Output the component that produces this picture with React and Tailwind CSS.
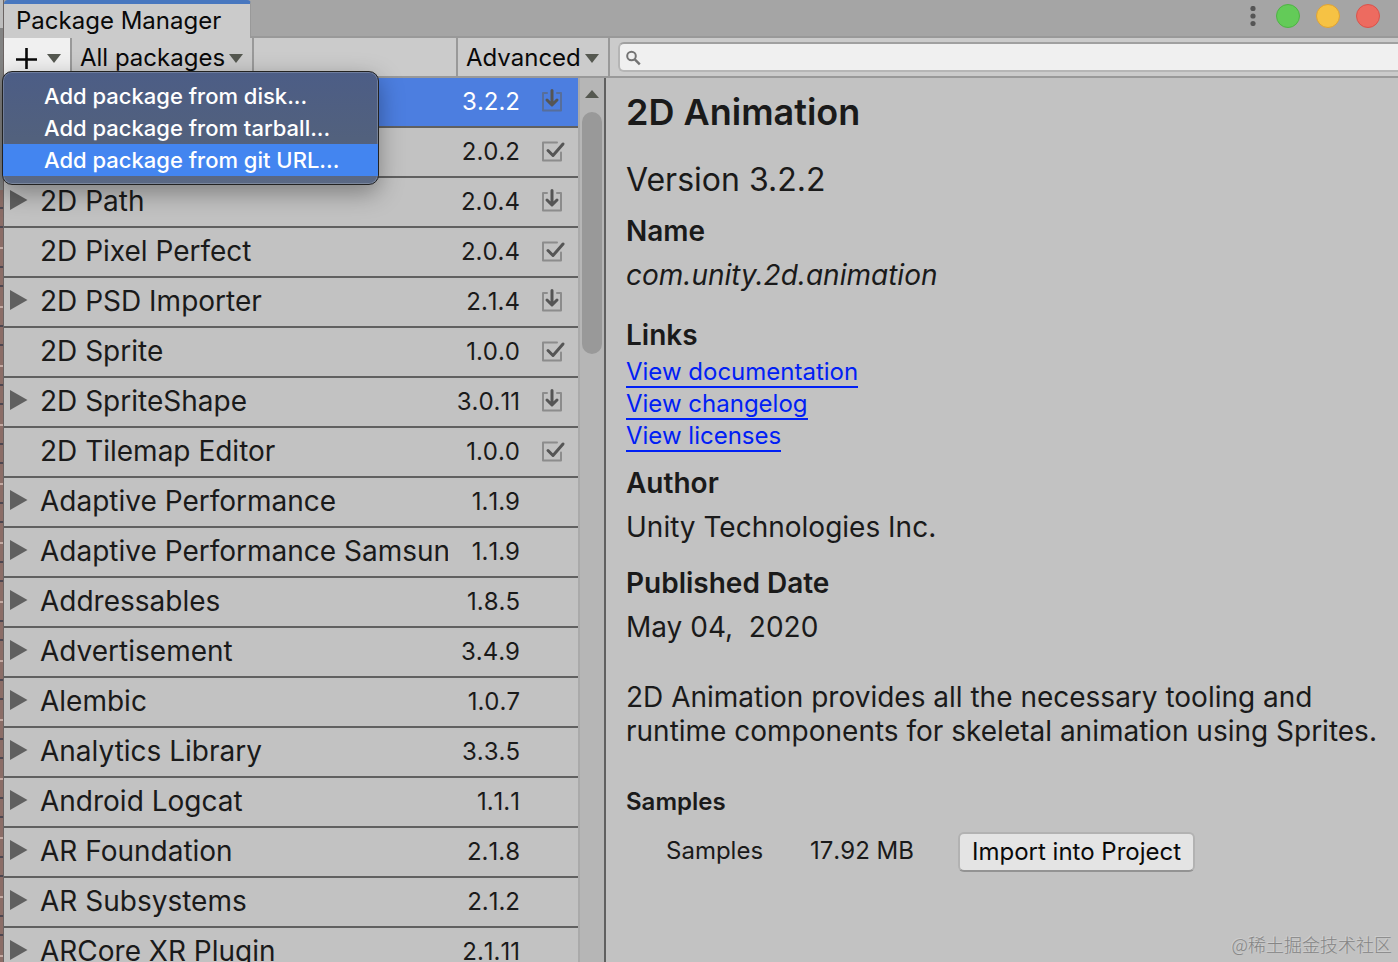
import { useState } from 'react';

const MENU_ITEMS = [
  'Add package from disk...',
  'Add package from tarball...',
  'Add package from git URL...',
];

const PACKAGES = [
  { name: '2D Animation',                 version: '3.2.2',  expandable: true,  status: 'update' },
  { name: '2D IK',                        version: '2.0.2',  expandable: false, status: 'installed' },
  { name: '2D Path',                      version: '2.0.4',  expandable: true,  status: 'update' },
  { name: '2D Pixel Perfect',             version: '2.0.4',  expandable: false, status: 'installed' },
  { name: '2D PSD Importer',              version: '2.1.4',  expandable: true,  status: 'update' },
  { name: '2D Sprite',                    version: '1.0.0',  expandable: false, status: 'installed' },
  { name: '2D SpriteShape',               version: '3.0.11', expandable: true,  status: 'update' },
  { name: '2D Tilemap Editor',            version: '1.0.0',  expandable: false, status: 'installed' },
  { name: 'Adaptive Performance',         version: '1.1.9',  expandable: true },
  { name: 'Adaptive Performance Samsung', version: '1.1.9',  expandable: true },
  { name: 'Addressables',                 version: '1.8.5',  expandable: true },
  { name: 'Advertisement',                version: '3.4.9',  expandable: true },
  { name: 'Alembic',                      version: '1.0.7',  expandable: true },
  { name: 'Analytics Library',            version: '3.3.5',  expandable: true },
  { name: 'Android Logcat',               version: '1.1.1',  expandable: true },
  { name: 'AR Foundation',                version: '2.1.8',  expandable: true },
  { name: 'AR Subsystems',                version: '2.1.2',  expandable: true },
  { name: 'ARCore XR Plugin',             version: '2.1.11', expandable: true },
];

const LINKS = ['View documentation', 'View changelog', 'View licenses'];

export default function App() {
  const [selected, setSelected] = useState(0);

  return (
    <div className="flex h-screen overflow-hidden bg-[#c2c2c2] font-['Inter',sans-serif] text-[#1a1a1a]">
      <DesktopEdge />
      <div className="flex min-w-0 flex-1 flex-col">
        <TitleBar />
        <Toolbar />
        <main className="flex min-h-0 flex-1">
          <ul className="w-[574px] shrink-0 overflow-hidden">
            {PACKAGES.map((p, i) => (
              <PackageRow key={p.name} pkg={p} active={i === selected} onSelect={() => setSelected(i)} />
            ))}
          </ul>
          <ScrollTrack />
          <Details />
        </main>
      </div>
      <p className="absolute right-1.5 bottom-1.5 font-['Noto_Sans_CJK_SC',sans-serif] text-lg leading-6 font-light text-[#858585] [text-shadow:-1px_-1px_0_#cfcfcf]">
        @稀土掘金技术社区
      </p>
    </div>
  );
}

/* ── Window chrome ── */
function DesktopEdge() {
  return (
    <div className="flex w-1 shrink-0 flex-col border-r border-[#6b6463]">
      <div className="h-7 bg-[#bdbdbd]" />
      <div className="h-[162px] bg-[#838383]" />
      <div className="flex-1 bg-[repeating-linear-gradient(#8b6d67_0px,#8b6d67_17px,#4d4650_17px,#4d4650_19px,#8b6d67_19px,#8b6d67_36px,#4d4650_36px,#4d4650_38px,#8b6d67_38px,#8b6d67_57px,#c4aaa3_57px,#c4aaa3_59px)]" />
    </div>
  );
}

function TitleBar() {
  return (
    <header className="flex h-[38px] items-stretch justify-between bg-[#a5a5a5]">
      <h1 className="w-[247px] rounded-t-sm border-t-4 border-r border-t-[#4877bf] border-r-[#999] bg-[#cbcbcb] pl-3 text-2xl leading-[34px] text-[#090909]">
        Package Manager
      </h1>
      <div className="flex flex-1 items-center justify-end gap-4 border-b-2 border-[#999] pr-[18px] pb-1">
        <button aria-label="Window menu" className="px-1">
          <svg width="6" height="20" viewBox="0 0 6 20" fill="#555">
            <circle cx="3" cy="2.5" r="2.6" />
            <circle cx="3" cy="10" r="2.6" />
            <circle cx="3" cy="17.5" r="2.6" />
          </svg>
        </button>
        <button aria-label="Zoom" className="size-6 rounded-full border border-[#4fb345] bg-[#63cb58]" />
        <button aria-label="Minimize" className="size-6 rounded-full border border-[#dea236] bg-[#f6c244]" />
        <button aria-label="Close" className="size-6 rounded-full border border-[#d9534b] bg-[#ed6b60]" />
      </div>
    </header>
  );
}

function Toolbar() {
  return (
    <div className="flex h-10 border-b-2 border-[#999] bg-[#cbcbcb] text-2xl text-[#090909]">
      <div className="relative">
        <button
          aria-label="Add package"
          className="flex h-full w-[68px] items-center gap-2.5 border-r-2 border-[#999] bg-[#f0f0f0] pt-0.5 pl-3"
        >
          <svg width="21" height="22" viewBox="0 0 21 22" stroke="#090909" strokeWidth="2.6">
            <path d="M10.500 1v21M0 12.500h21" />
          </svg>
          <Caret />
        </button>
        <AddMenu />
      </div>
      <button className="flex w-[182px] items-center gap-1 border-r-2 border-[#999] pt-0.5 pl-2">
        All packages
        <Caret />
      </button>
      <div className="w-[202px]" />
      <button className="flex w-[154px] items-center gap-1 border-x-2 border-[#999] pt-0.5 pl-2">
        Advanced
        <Caret />
      </button>
      <div className="flex min-w-0 flex-1 items-center pl-2">
        <label className="flex h-[30px] w-full items-center rounded-l-md border-2 border-r-0 border-[#b5b5b5] border-t-[#a0a0a0] bg-[#f0f0f0] pt-0.5 pl-1.5">
          <svg width="16" height="16" viewBox="0 0 16 16" fill="none" stroke="#737373" strokeWidth="2">
            <circle cx="5.5" cy="6" r="4.3" />
            <path d="M8.800 9.300l5 5" strokeWidth="2.4" />
          </svg>
          <input type="text" aria-label="Search packages" className="min-w-0 flex-1 bg-transparent px-2 text-xl outline-none" />
        </label>
      </div>
    </div>
  );
}

function AddMenu() {
  return (
    <div
      role="menu"
      className="absolute top-[33px] -left-0.5 z-10 w-[377px] overflow-hidden rounded-[10px] border border-[#222] bg-[linear-gradient(#4c5d86,#52617d_60%,#5b6984)] py-2 text-[22px] leading-8 font-medium text-white shadow-[0_8px_24px_rgba(0,0,0,0.35)] inset-ring inset-ring-white/20"
    >
      {MENU_ITEMS.map((item, i) => (
        <button
          key={item}
          role="menuitem"
          className={`block w-full pl-[41px] text-left ${i === 2 ? 'bg-[#4385f0]' : ''}`}
        >
          {item}
        </button>
      ))}
    </div>
  );
}

/* ── Package list ── */
function PackageRow({ pkg, active, onSelect }) {
  return (
    <li className={`border-b-2 border-[#606060] ${active ? 'bg-[#4c7ee0] text-white' : ''}`}>
      <button onClick={onSelect} className="flex h-12 w-full items-center pr-3 pb-0.5 pl-1.5 text-left">
        <span className="w-[30px] shrink-0 pb-0.5">
          {pkg.expandable && (
            <svg width="18" height="20" viewBox="0 0 18 20" fill="#606060">
              <path d="M0 0l17.500 10L0 20z" />
            </svg>
          )}
        </span>
        <span className="min-w-0 flex-1 overflow-hidden text-[28px] leading-10 whitespace-nowrap">{pkg.name}</span>
        <span className="w-[72px] pt-0.5 text-right text-2xl [font-kerning:none]">{pkg.version}</span>
        <span className="ml-[22px] h-6 w-6">
          {pkg.status === 'update' && <UpdateIcon />}
          {pkg.status === 'installed' && <InstalledIcon />}
        </span>
      </button>
    </li>
  );
}

function ScrollTrack() {
  return (
    <div className="flex w-7 shrink-0 flex-col items-center border-r-2 border-l-2 border-r-[#606060] border-l-[#aaa] bg-[#b6b6b6] pt-3">
      <svg width="14" height="8" viewBox="0 0 14 8" fill="#555850">
        <path d="M7 0l7 8H0z" />
      </svg>
      <div className="mt-3.5 h-[242px] w-5 rounded-full bg-[#999]" />
    </div>
  );
}

/* ── Details pane ── */
function Details() {
  return (
    <section className="min-w-0 flex-1 pt-3 pr-5 pl-5 text-[28px] leading-9">
      <h2 className="text-4xl leading-11 font-semibold">2D Animation</h2>
      <p className="mt-6 text-[32px] leading-11">Version 3.2.2</p>

      <h3 className="mt-[11px] font-semibold">Name</h3>
      <p className="mt-2 italic">com.unity.2d.animation</p>

      <h3 className="mt-6 font-semibold">Links</h3>
      <ul className="mt-[3px] text-2xl">
        {LINKS.map(link => (
          <li key={link} className="flex">
            <a href="#" className="h-8 border-b-2 border-[#0020f5] leading-8 text-[#0020f5]">{link}</a>
          </li>
        ))}
      </ul>

      <h3 className="mt-[13px] font-semibold">Author</h3>
      <p className="mt-2">Unity Technologies Inc.</p>

      <h3 className="mt-5 font-semibold">Published Date</h3>
      <p className="mt-2 whitespace-pre">May 04,  2020</p>

      <p className="mt-[35px] leading-[34px]">
        2D Animation provides all the necessary tooling and runtime components for skeletal animation using Sprites.
      </p>

      <h3 className="mt-9 text-2xl leading-9 font-semibold">Samples</h3>
      <div className="mt-3 flex items-center pl-10 text-2xl">
        <span className="w-36 pb-0.5">Samples</span>
        <span className="w-[148px] pb-0.5 [font-kerning:none]">17.92 MB</span>
        <button className="h-10 rounded-md border-2 border-[#b2b2b2] border-b-[#939393] bg-[#e4e4e4] px-3 leading-9 whitespace-nowrap text-[#090909]">
          Import into Project
        </button>
      </div>
    </section>
  );
}

/* ── Icons ── */
function Caret() {
  return (
    <svg width="14" height="9" viewBox="0 0 14 9" fill="#555850" className="shrink-0">
      <path d="M0 0h14L7 9z" />
    </svg>
  );
}

function UpdateIcon() {
  return (
    <svg width="24" height="24" viewBox="0 0 24 24" fill="none" strokeLinecap="round" strokeLinejoin="round">
      <path d="M5 4H1v17.500h18V4h-4" stroke="#606060" strokeOpacity="0.55" strokeWidth="2" />
      <path d="M10 1.500v14M5 11l5 5 5-5" stroke="#555" strokeWidth="3" />
    </svg>
  );
}

function InstalledIcon() {
  return (
    <svg width="24" height="24" viewBox="0 0 24 24" fill="none" strokeLinecap="round" strokeLinejoin="round">
      <path d="M15 3.500H1V21.500h18v-8" stroke="#606060" strokeOpacity="0.55" strokeWidth="2" />
      <path d="M6 11.500l5 5L21 5" stroke="#555" strokeWidth="3" />
    </svg>
  );
}
